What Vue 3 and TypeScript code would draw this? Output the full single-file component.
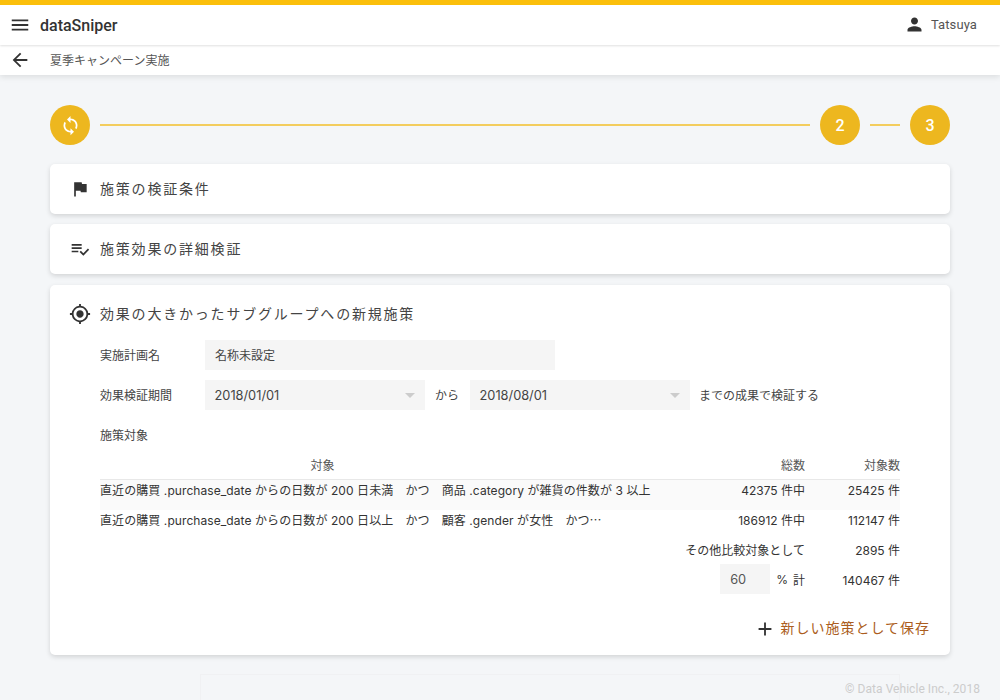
<script setup lang="ts">
interface Row { target: string; total: string; count: string; hi?: boolean }
const rows: Row[] = [
  { target: '直近の購買 .purchase_date からの日数が 200 日未満　かつ　商品 .category が雑貨の件数が 3 以上', total: '42375 件中', count: '25425 件', hi: true },
  { target: '直近の購買 .purchase_date からの日数が 200 日以上　かつ　顧客 .gender が女性　かつ⋯', total: '186912 件中', count: '112147 件' },
]
</script>

<template>
  <div class="page">
    <header class="topbar">
      <svg class="ic menu" viewBox="0 0 24 24"><path d="M3 18h18v-2H3v2zm0-5h18v-2H3v2zm0-7v2h18V6H3z" /></svg>
      <span class="logo">dataSniper</span>
      <span class="spacer"></span>
      <svg class="ic user" viewBox="0 0 24 24"><path d="M12 12c2.21 0 4-1.79 4-4s-1.79-4-4-4-4 1.79-4 4 1.79 4 4 4zm0 2c-2.67 0-8 1.34-8 4v2h16v-2c0-2.66-5.33-4-8-4z" /></svg>
      <span class="uname">Tatsuya</span>
    </header>
    <div class="subbar">
      <svg class="ic back" viewBox="0 0 24 24"><path d="M20 11H7.83l5.59-5.59L12 4l-8 8 8 8 1.41-1.41L7.83 13H20v-2z" /></svg>
      <span class="crumb">夏季キャンペーン実施</span>
    </div>

    <main class="content">
      <div class="stepper">
        <div class="step">
          <svg class="sync" viewBox="0 0 24 24"><path d="M12 4V1L8 5l4 4V6c3.31 0 6 2.69 6 6 0 1.01-.25 1.97-.7 2.8l1.46 1.46C19.54 15.03 20 13.57 20 12c0-4.42-3.58-8-8-8zm0 14c-3.31 0-6-2.69-6-6 0-1.01.25-1.97.7-2.8L5.24 7.74C4.46 8.97 4 10.43 4 12c0 4.42 3.58 8 8 8v3l4-4-4-4v3z" /></svg>
        </div>
        <div class="line"></div>
        <div class="step">2</div>
        <div class="line short"></div>
        <div class="step">3</div>
      </div>

      <section class="card head-card first">
        <svg class="ic flag" viewBox="0 0 24 24"><path d="M14.4 6L14 4H5v17h2v-7h5.6l.4 2h7V6z" /></svg>
        <h2>施策の検証条件</h2>
      </section>
      <section class="card head-card">
        <svg class="ic check" viewBox="0 0 24 24"><path d="M14 10H2v2h12v-2zm0-4H2v2h12V6zM2 16h8v-2H2v2zm19.5-4.5L23 13l-6.99 7-4.51-4.5L13 14l3.01 3 5.49-5.5z" /></svg>
        <h2>施策効果の詳細検証</h2>
      </section>

      <section class="card main-card">
        <div class="title-row">
          <svg class="ic target" viewBox="0 0 24 24"><path d="M12 8c-2.21 0-4 1.79-4 4s1.79 4 4 4 4-1.79 4-4-1.79-4-4-4zm8.94 3A8.994 8.994 0 0 0 13 3.06V1h-2v2.06A8.994 8.994 0 0 0 3.06 11H1v2h2.06A8.994 8.994 0 0 0 11 20.94V23h2v-2.06A8.994 8.994 0 0 0 20.94 13H23v-2h-2.06zM12 19c-3.87 0-7-3.13-7-7s3.13-7 7-7 7 3.13 7 7-3.13 7-7 7z" /></svg>
          <h2>効果の大きかったサブグループへの新規施策</h2>
        </div>

        <div class="form">
          <div class="form-row">
            <span class="label">実施計画名</span>
            <div class="field name">名称未設定</div>
          </div>
          <div class="form-row">
            <span class="label">効果検証期間</span>
            <div class="field date">2018/01/01<i class="caret"></i></div>
            <span class="between">から</span>
            <div class="field date">2018/08/01<i class="caret"></i></div>
            <span class="after">までの成果で検証する</span>
          </div>
          <div class="form-row sub"><span class="label">施策対象</span></div>

          <div class="table">
            <div class="tr th">
              <div class="c-target">対象</div>
              <div class="c-total">総数</div>
              <div class="c-count">対象数</div>
            </div>
            <div v-for="r in rows" :key="r.total" class="tr body" :class="r.hi ? 'hi' : 'second'">
              <div class="c-target left">{{ r.target }}</div>
              <div class="c-total">{{ r.total }}</div>
              <div class="c-count">{{ r.count }}</div>
            </div>
            <div class="tr body">
              <div class="c-target"></div>
              <div class="c-total wide">その他比較対象として</div>
              <div class="c-count">2895 件</div>
            </div>
            <div class="tr body">
              <div class="c-target"></div>
              <div class="c-total wide pct">
                <div class="field rate">60</div>
                <span class="pct-sign">%</span>
                <span>計</span>
              </div>
              <div class="c-count">140467 件</div>
            </div>
          </div>
        </div>

        <div class="actions">
          <svg class="ic plus" viewBox="0 0 24 24"><path d="M19 13h-6v6h-2v-6H5v-2h6V5h2v6h6v2z" /></svg>
          <span class="save">新しい施策として保存</span>
        </div>
      </section>

      <div class="ghost"></div>
    </main>
    <div class="copy">© Data Vehicle Inc., 2018</div>
  </div>
</template>

<style>
html, body { margin: 0; background: #f4f6f8; }
</style>

<style scoped>
.page {
  position: relative;
  width: 1000px;
  height: 700px;
  overflow: hidden;
  background: #f4f6f8;
  color: #333;
  font-family: Inter, "Noto Sans CJK JP", sans-serif;
}
.ic { fill: #333; flex: none; display: block; }
.topbar {
  height: 40px;
  border-top: 5px solid #fbbf0b;
  background: #fff;
  display: flex;
  align-items: center;
  padding: 0 23px 0 9px;
  position: relative;
  z-index: 2;
  box-shadow: 0 1px 2px rgba(0, 0, 0, .12);
}
.menu { width: 22px; height: 22px; }
.logo {
  margin-left: 9px;
  font: 500 16px Roboto, sans-serif;
  color: #333;
}
.spacer { flex: 1; }
.user { width: 21px; height: 21px; margin-right: 6px; margin-bottom: 2px; }
.uname { font: 400 13px Roboto, sans-serif; letter-spacing: .1px; color: #555; padding-bottom: 1px; }
.subbar {
  height: 30px;
  background: #fff;
  display: flex;
  align-items: center;
  padding-left: 9px;
  position: relative;
  z-index: 1;
  box-shadow: 0 2px 6px rgba(0, 0, 0, .1);
}
.back { width: 22px; height: 22px; margin-bottom: 1px; }
.crumb { margin-left: 19px; font: 400 12px "Noto Sans CJK JP", sans-serif; color: #555; padding-bottom: 2px; }
.content { padding: 30px 50px 0; }
.stepper { display: flex; align-items: center; gap: 10px; margin-bottom: 19px; }
.step {
  width: 40px;
  height: 40px;
  border-radius: 50%;
  background: #edb71f;
  color: #fff;
  font: 500 16px Roboto, sans-serif;
  display: flex;
  align-items: center;
  justify-content: center;
  flex: none;
}
.sync { width: 21px; height: 21px; fill: #fff; }
.line { flex: 1; height: 2px; margin-bottom: 1px; background: #f3cd5e; }
.line.short { flex: none; width: 30px; }
.card {
  background: #fff;
  border-radius: 5px;
  box-shadow: 0 2px 5px rgba(0, 0, 0, .14);
  margin-bottom: 10px;
}
.head-card {
  height: 50px;
  display: flex;
  align-items: center;
  padding-left: 20px;
}
.head-card + .main-card { margin-top: 11px; }
.head-card .ic { width: 20px; height: 20px; margin-right: 10px; }
h2 {
  margin: 0;
  padding-bottom: 3px;
  font: 400 14px "Noto Sans CJK JP", sans-serif;
  letter-spacing: 1.8px;
  color: #444;
}
.main-card { height: 370px; position: relative; }
.title-row { display: flex; align-items: center; padding: 18px 0 0 19px; height: 22px; }
.title-row h2 { padding-bottom: 2px; }
.target { width: 22px; height: 22px; margin-right: 9px; }
.form { padding: 15px 50px 0; }
.form-row {
  display: flex;
  align-items: center;
  height: 30px;
  margin-bottom: 10px;
  font: 400 12px "Noto Sans CJK JP", sans-serif;
  color: #444;
}
.form-row.sub { margin-bottom: 0; }
.label, .between, .after { padding-bottom: 2px; }
.label { width: 105px; flex: none; }
.field {
  background: #f5f5f5;
  height: 30px;
  display: flex;
  align-items: center;
  padding: 0 10px;
  box-sizing: border-box;
  font: 400 12.8px Inter, "Noto Sans CJK JP", sans-serif;
  color: #444;
  position: relative;
}
.name { width: 350px; font-size: 12px; padding-bottom: 2px; }
.date { width: 220px; padding-left: 9.5px; }
.caret {
  position: absolute;
  right: 10px;
  top: 13px;
  border-left: 5px solid transparent;
  border-right: 5px solid transparent;
  border-top: 5px solid #ccc;
}
.between { margin: 0 11px 0 10px; }
.after { margin-left: 9px; }
.table { font: 400 12px Inter, "Noto Sans CJK JP", sans-serif; color: #333; }
.tr { display: flex; align-items: center; height: 30px; box-sizing: border-box; }
.th { height: 30px; border-bottom: 1px solid #e8e8e8; color: #555; }
.th .c-target { padding-right: 155px; }
.hi { background: #fafafa; padding-bottom: 12px; }
.second { height: 24px; padding-bottom: 6px; }
.c-target { flex: 1; text-align: center; min-width: 0; }
.c-target.left { text-align: left; white-space: nowrap; letter-spacing: .08px; }
.c-total { width: 105px; text-align: right; flex: none; }
.c-count { width: 95px; text-align: right; flex: none; }
.wide { width: 240px; margin-left: -135px; }
.pct { display: flex; align-items: center; justify-content: flex-end; }
.rate { width: 50px; padding-left: 10px; color: #555; }
.pct-sign { margin: 0 5px 0 6px; }
.actions {
  position: absolute;
  right: 20px;
  bottom: 14px;
  display: flex;
  align-items: center;
}
.plus { width: 22px; height: 22px; margin-right: 4px; }
.save {
  font: 400 14px "Noto Sans CJK JP", sans-serif;
  letter-spacing: 1px;
  color: #ab5d20;
  padding-bottom: 4px;
}
.ghost {
  margin: 19px 50px 0 150px;
  height: 60px;
  border: 1px solid #f0f1f3;
  box-sizing: border-box;
}
.copy {
  position: absolute;
  right: 20px;
  bottom: 4px;
  font: 400 12px Roboto, sans-serif;
  letter-spacing: .05px;
  color: #ccc;
}
</style>
